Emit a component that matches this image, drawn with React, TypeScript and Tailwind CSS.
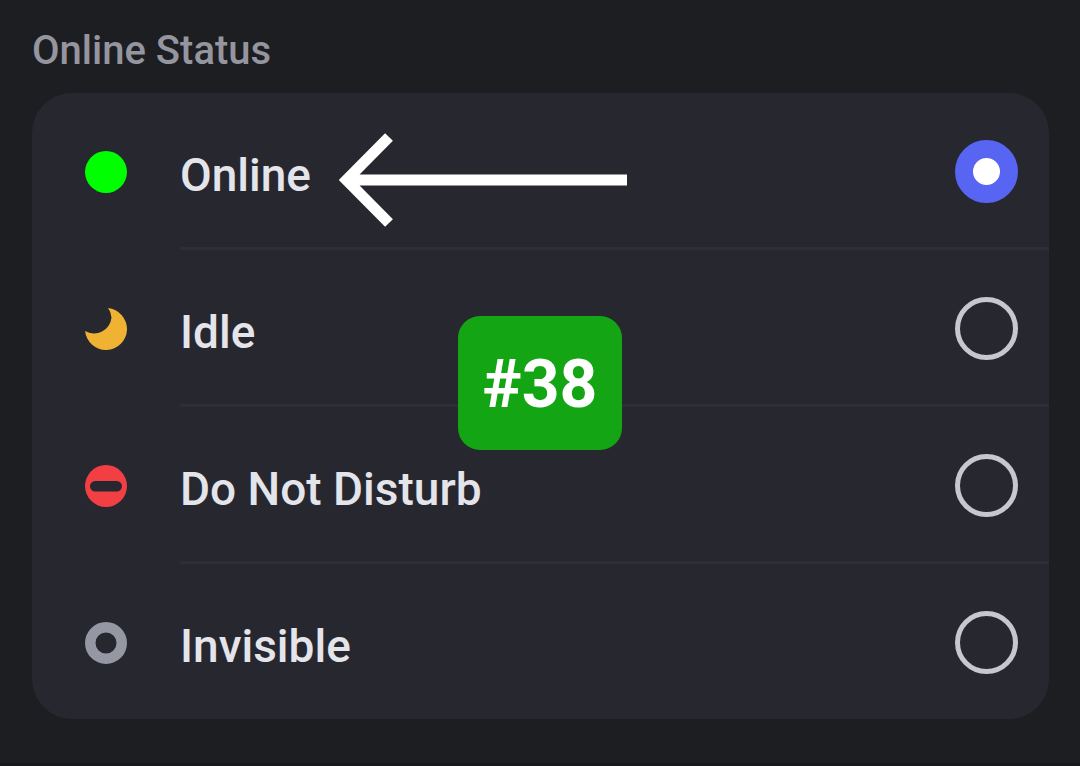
import { useState } from "react";
import type { ReactNode } from "react";

type Status = { id: string; label: string; icon: ReactNode };

const statuses: Status[] = [
  {
    id: "online",
    label: "Online",
    icon: <circle cx="21" cy="21" r="21" fill="#00ff00" />,
  },
  {
    id: "idle",
    label: "Idle",
    icon: (
      <path
        d="M23 .100A21 21 0 1 1 .100 23A17.500 17.500 0 0 0 26.500 9.500A17 17 0 0 0 23 .100Z"
        fill="#f0b232"
      />
    ),
  },
  {
    id: "dnd",
    label: "Do Not Disturb",
    icon: (
      <>
        <circle cx="21" cy="21" r="21" fill="#f23f43" />
        <rect x="5" y="16" width="32" height="10.500" rx="5.250" fill="#272730" />
      </>
    ),
  },
  {
    id: "invisible",
    label: "Invisible",
    icon: (
      <circle cx="21" cy="21" r="15.750" fill="none" stroke="#9597a3" strokeWidth="10.500" />
    ),
  },
];

export default function App() {
  const [selected, setSelected] = useState("online");

  return (
    <main className="min-h-screen border-b-3 border-[#17181c] bg-[#1d1e22] pr-[31px] pl-8 font-['Roboto',sans-serif] font-medium">
      <h1 id="status-heading" className="pt-[25px] pb-4 text-[40px] leading-[52px] text-[#94959f]">
        Online Status
      </h1>
      <div className="relative">
        <div
          role="radiogroup"
          aria-labelledby="status-heading"
          className="overflow-hidden rounded-[40px] bg-[#272730]"
        >
          {statuses.map((status) => (
            <label key={status.id} className="group flex cursor-pointer pl-[53px]">
              <svg viewBox="0 0 42 42" className="mt-[58px] size-[42px] shrink-0" aria-hidden="true">
                {status.icon}
              </svg>
              <span className="ml-[53px] flex flex-1 items-center justify-between border-b-3 border-[#2e2e37] pt-[47px] pr-[31px] pb-11 group-last:border-b-0 group-last:pb-[45px]">
                <span className="pt-1.5 text-[46px] leading-[56px] text-[#e4e5ea]">{status.label}</span>
                <input
                  type="radio"
                  name="status"
                  value={status.id}
                  checked={selected === status.id}
                  onChange={() => setSelected(status.id)}
                  className="size-[63px] shrink-0 appearance-none rounded-full border-5 border-[#c7c8ce] checked:border-[18px] checked:border-[#5865f2] checked:bg-white"
                />
              </span>
            </label>
          ))}
        </div>
        <svg
          viewBox="0 0 288 94"
          className="pointer-events-none absolute top-10 left-[307px] h-[94px] w-[288px]"
          fill="none"
          stroke="#ffffff"
          strokeWidth="11"
          aria-hidden="true"
        >
          <path d="M50 4L7.500 47L50 90M10 47H288" />
        </svg>
        <div className="pointer-events-none absolute top-[223px] left-[426px] flex h-[134px] w-[164px] items-center justify-center rounded-[22px] bg-[#13a513] pt-1 text-[66px] leading-none font-bold text-white">
          #38
        </div>
      </div>
    </main>
  );
}
